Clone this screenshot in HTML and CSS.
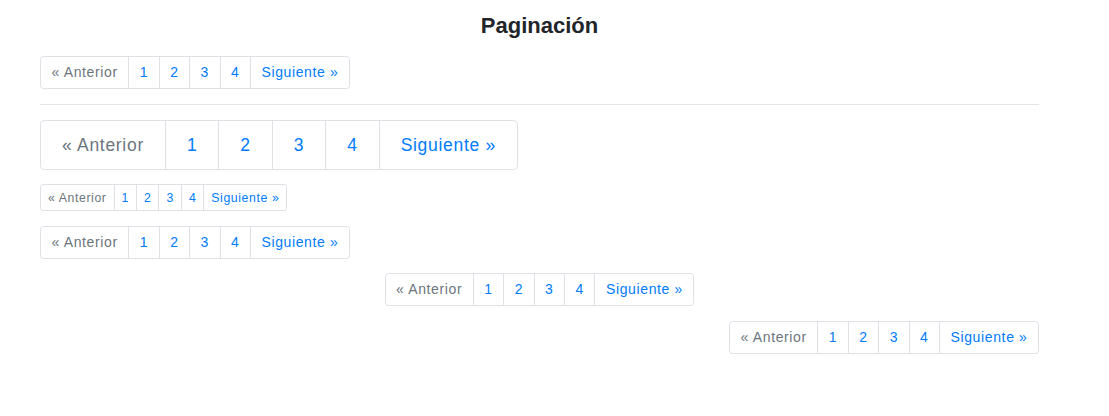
FILE: index.html
```html
<!DOCTYPE html>
<html lang="es">
<head>
<meta charset="utf-8">
<title>Paginación</title>
<link rel="stylesheet" href="styles.css">
</head>
<body>
<div class="container">
  <h3 class="title">Paginación</h3>

  <ul class="pagination">
    <li class="page-item disabled"><a class="page-link" href="#">« Anterior</a></li>
    <li class="page-item"><a class="page-link" href="#">1</a></li>
    <li class="page-item"><a class="page-link" href="#">2</a></li>
    <li class="page-item"><a class="page-link" href="#">3</a></li>
    <li class="page-item"><a class="page-link" href="#">4</a></li>
    <li class="page-item"><a class="page-link" href="#">Siguiente »</a></li>
  </ul>

  <hr class="divider">

  <ul class="pagination pagination-lg">
    <li class="page-item disabled"><a class="page-link" href="#">« Anterior</a></li>
    <li class="page-item"><a class="page-link" href="#">1</a></li>
    <li class="page-item"><a class="page-link" href="#">2</a></li>
    <li class="page-item"><a class="page-link" href="#">3</a></li>
    <li class="page-item"><a class="page-link" href="#">4</a></li>
    <li class="page-item"><a class="page-link" href="#">Siguiente »</a></li>
  </ul>

  <ul class="pagination pagination-sm">
    <li class="page-item disabled"><a class="page-link" href="#">« Anterior</a></li>
    <li class="page-item"><a class="page-link" href="#">1</a></li>
    <li class="page-item"><a class="page-link" href="#">2</a></li>
    <li class="page-item"><a class="page-link" href="#">3</a></li>
    <li class="page-item"><a class="page-link" href="#">4</a></li>
    <li class="page-item"><a class="page-link" href="#">Siguiente »</a></li>
  </ul>

  <ul class="pagination">
    <li class="page-item disabled"><a class="page-link" href="#">« Anterior</a></li>
    <li class="page-item"><a class="page-link" href="#">1</a></li>
    <li class="page-item"><a class="page-link" href="#">2</a></li>
    <li class="page-item"><a class="page-link" href="#">3</a></li>
    <li class="page-item"><a class="page-link" href="#">4</a></li>
    <li class="page-item"><a class="page-link" href="#">Siguiente »</a></li>
  </ul>

  <ul class="pagination justify-center">
    <li class="page-item disabled"><a class="page-link" href="#">« Anterior</a></li>
    <li class="page-item"><a class="page-link" href="#">1</a></li>
    <li class="page-item"><a class="page-link" href="#">2</a></li>
    <li class="page-item"><a class="page-link" href="#">3</a></li>
    <li class="page-item"><a class="page-link" href="#">4</a></li>
    <li class="page-item"><a class="page-link" href="#">Siguiente »</a></li>
  </ul>

  <ul class="pagination justify-end">
    <li class="page-item disabled"><a class="page-link" href="#">« Anterior</a></li>
    <li class="page-item"><a class="page-link" href="#">1</a></li>
    <li class="page-item"><a class="page-link" href="#">2</a></li>
    <li class="page-item"><a class="page-link" href="#">3</a></li>
    <li class="page-item"><a class="page-link" href="#">4</a></li>
    <li class="page-item"><a class="page-link" href="#">Siguiente »</a></li>
  </ul>
</div>
</body>
</html>
```

FILE: styles.css
```css
html {
  font-size: 14px;
}
body {
  margin: 0;
  background: #fff;
  color: #212529;
  font-family: "Liberation Sans", Arial, Helvetica, sans-serif;
  font-size: 14px;
  line-height: 1.5;
}
.container {
  width: 999px;
  margin-left: 40px;
  padding-top: 13px;
}
.title {
  margin: 0 0 17px;
  text-align: center;
  font-size: 22px;
  font-weight: 700;
  line-height: 26px;
  color: #212529;
}
.divider {
  margin: 13px 0 15px;
  border: 0;
  border-top: 1px solid rgba(0, 0, 0, 0.1);
  height: 0;
}
.pagination {
  display: flex;
  padding-left: 0;
  margin: 0 0 14.5px;
  list-style: none;
}
.justify-center {
  justify-content: center;
}
.justify-end {
  justify-content: flex-end;
}
.page-link {
  display: block;
  padding: 7px 10.5px;
  margin-left: -1px;
  line-height: 17px;
  font-size: 14px;
  letter-spacing: 0.045em;
  color: #007bff;
  text-decoration: none;
  background-color: #fff;
  border: 1px solid #dee2e6;
}
.page-item:first-child .page-link {
  margin-left: 0;
  border-top-left-radius: 3.5px;
  border-bottom-left-radius: 3.5px;
}
.page-item:last-child .page-link {
  border-top-right-radius: 3.5px;
  border-bottom-right-radius: 3.5px;
}
.page-item.disabled .page-link {
  color: #6c757d;
}
.pagination-lg .page-link {
  padding: 11px 21px;
  font-size: 17.5px;
  line-height: 26px;
  letter-spacing: 0.04em;
}
.pagination-lg .page-item:first-child .page-link {
  border-top-left-radius: 4.2px;
  border-bottom-left-radius: 4.2px;
}
.pagination-lg .page-item:last-child .page-link {
  border-top-right-radius: 4.2px;
  border-bottom-right-radius: 4.2px;
}
.pagination-sm .page-link {
  padding: 3.5px 7px;
  font-size: 12.25px;
  line-height: 18px;
  letter-spacing: 0.05em;
}
.pagination-sm .page-item:first-child .page-link {
  border-top-left-radius: 2.8px;
  border-bottom-left-radius: 2.8px;
}
.pagination-sm .page-item:last-child .page-link {
  border-top-right-radius: 2.8px;
  border-bottom-right-radius: 2.8px;
}
```
